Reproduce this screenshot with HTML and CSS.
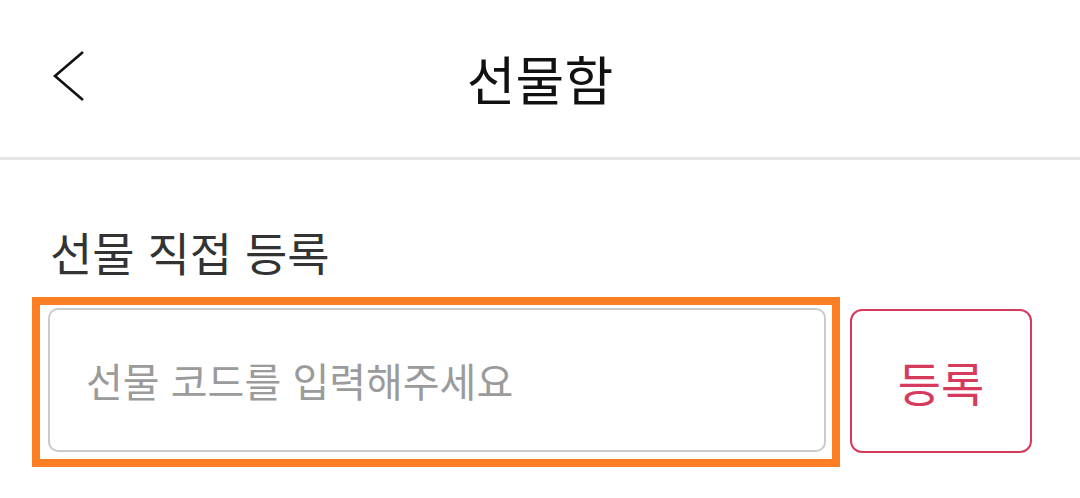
FILE: index.html
```html
<!DOCTYPE html>
<html lang="ko">

<head>
    <meta charset="UTF-8">
    <meta name="viewport" content="width=device-width, initial-scale=1.0">
    <title>선물함</title>
    <link rel="stylesheet" href="styles.css">
</head>

<body>
    <header class="top-bar">
        <a class="back-button" href="javascript:void(0)">
            <svg width="34" height="54" viewBox="0 0 34 54">
                <polyline points="30,3 2,27 30,51" fill="none" stroke="#111" stroke-width="2.6" />
            </svg>
        </a>
        <h1>선물함</h1>
    </header>

    <main class="gift-register">
        <h2>선물 직접 등록</h2>
        <div class="register-row">
            <!-- 입력창 강조 영역 -->
            <div class="input-highlight">
                <input type="text" class="code-input" placeholder="선물 코드를 입력해주세요">
            </div>
            <button type="button" class="register-button">등록</button>
        </div>
    </main>
</body>

</html>
```

FILE: styles.css
```css
/* 기본 스타일 */
body {
    font-family: "Noto Sans CJK KR", "Noto Sans", sans-serif;
    background-color: #fff;
    margin: 0;
    padding: 0;
}

.top-bar {
    position: relative;
    height: 157px;
    border-bottom: 3px solid #e5e5e5;
    display: flex;
    align-items: center;
    justify-content: center;
}

.back-button {
    position: absolute;
    left: 53px;
    top: 49px;
    display: block;
}

.top-bar h1 {
    margin: 0;
    font-size: 53px;
    font-weight: 400;
    color: #111;
    line-height: 1;
}

/* 선물 등록 영역 */
.gift-register {
    padding-top: 63px;
}

.gift-register h2 {
    margin: 0 0 18px 50px;
    font-size: 46px;
    font-weight: 400;
    color: #333;
    line-height: 56px;
}

.register-row {
    display: flex;
    align-items: flex-start;
    padding-left: 32px;
}

.input-highlight {
    border: 8px solid #fd7f23;
    padding: 3px 6px 7px 8px;
}

.code-input {
    box-sizing: border-box;
    width: 778px;
    height: 144px;
    border: 2.5px solid #cacaca;
    border-radius: 10px;
    padding: 0 36px;
    font-family: inherit;
    font-size: 40px;
    color: #333;
    outline: none;
}

.code-input::placeholder {
    color: #9b9b9b;
}

.register-button {
    box-sizing: border-box;
    margin-top: 12px;
    margin-left: 10px;
    width: 182px;
    height: 144px;
    background-color: #fff;
    border: 2.5px solid #d63a5d;
    border-radius: 12px;
    color: #d63a5d;
    font-family: inherit;
    font-size: 47px;
    font-weight: 400;
    cursor: pointer;
}
```
